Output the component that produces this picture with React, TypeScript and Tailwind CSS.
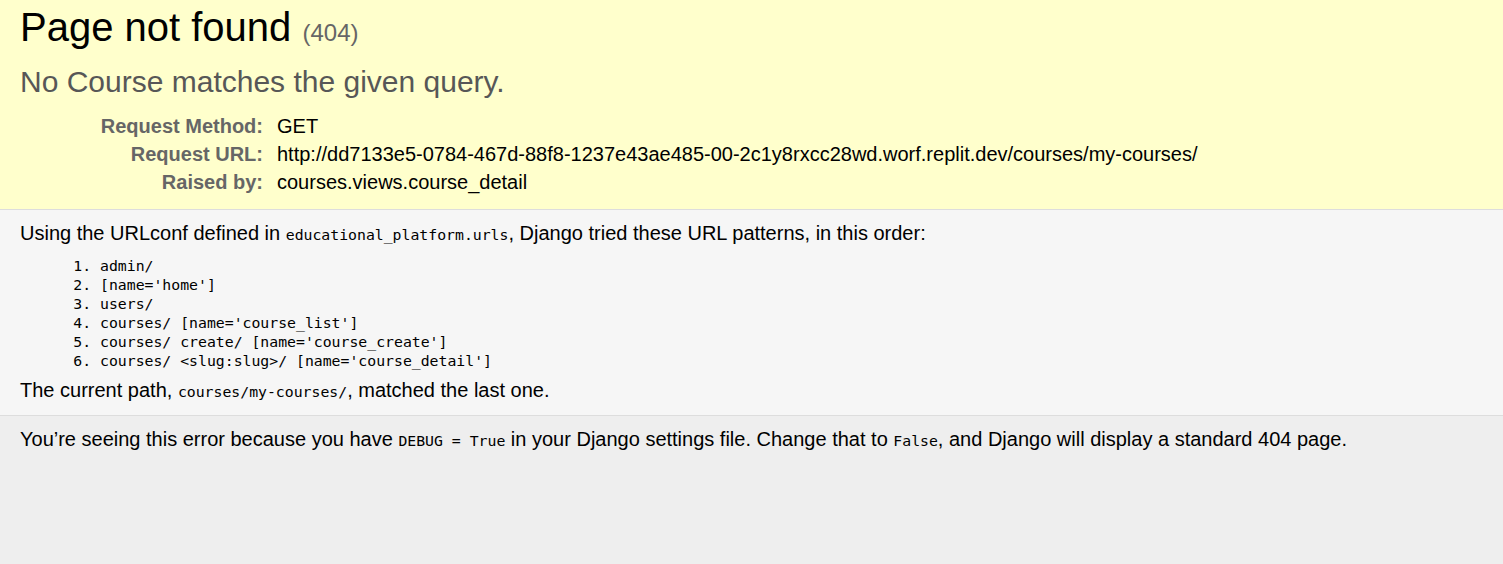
const mono = "font-['DejaVu_Sans_Mono','Liberation_Mono',monospace] text-[14.8px] leading-none";

type Row = { label: string; value: string };

const rows: Row[] = [
  { label: "Request Method:", value: "GET" },
  {
    label: "Request URL:",
    value:
      "http://dd7133e5-0784-467d-88f8-1237e43ae485-00-2c1y8rxcc28wd.worf.replit.dev/courses/my-courses/",
  },
  { label: "Raised by:", value: "courses.views.course_detail" },
];

const patterns = [
  "admin/",
  "[name='home']",
  "users/",
  "courses/ [name='course_list']",
  "courses/ create/ [name='course_create']",
  "courses/ <slug:slug>/ [name='course_detail']",
];

const Code = ({ children }: { children: React.ReactNode }) => (
  <code className={mono}>{children}</code>
);

export default function App() {
  return (
    <div className="min-h-screen bg-[#eee] text-black font-['Liberation_Sans',Arial,sans-serif] text-[20px]">
      {/* Summary */}
      <header className="bg-[#ffc] border-b border-[#ddd] px-[20px] pt-[10px] pb-[13px]">
        <h1 className="text-[40px] leading-[35px] font-normal">
          Page not found <small className="text-[24px] leading-none text-[#666]">(404)</small>
        </h1>
        <pre className="mt-[19px] font-['Liberation_Sans',Arial,sans-serif] text-[30px] leading-[35px] text-[#575757]">
          No Course matches the given query.
        </pre>
        <div className="mt-[13px]">
          {rows.map((r) => (
            <div key={r.label} className="flex leading-[28px]">
              <div className="w-[243px] shrink-0 text-right font-bold text-[#666]">{r.label}</div>
              <div className="ml-[14px]">{r.value}</div>
            </div>
          ))}
        </div>
      </header>

      {/* URL patterns */}
      <main className="bg-[#f6f6f6] border-b border-[#ddd] px-[20px] pt-[11px] pb-[13px]">
        <p className="leading-[24px]">
          Using the URLconf defined in <Code>educational_platform.urls</Code>, Django tried these URL
          patterns, in this order:
        </p>
        <ol className="list-decimal ml-[80px] mt-[11px] mb-[8px] font-['DejaVu_Sans_Mono','Liberation_Mono',monospace] text-[14.8px] leading-[19px]">
          {patterns.map((p) => (
            <li key={p} className="whitespace-pre">
              {p}
            </li>
          ))}
        </ol>
        <p className="leading-[24px]">
          The current path, <Code>courses/my-courses/</Code>, matched the last one.
        </p>
      </main>

      {/* Explanation */}
      <footer className="bg-[#eee] px-[20px] pt-[11px] pb-[10px]">
        <p className="leading-[24px]">
          You’re seeing this error because you have <Code>DEBUG = True</Code> in your Django settings
          file. Change that to <Code>False</Code>, and Django will display a standard 404 page.
        </p>
      </footer>
    </div>
  );
}
